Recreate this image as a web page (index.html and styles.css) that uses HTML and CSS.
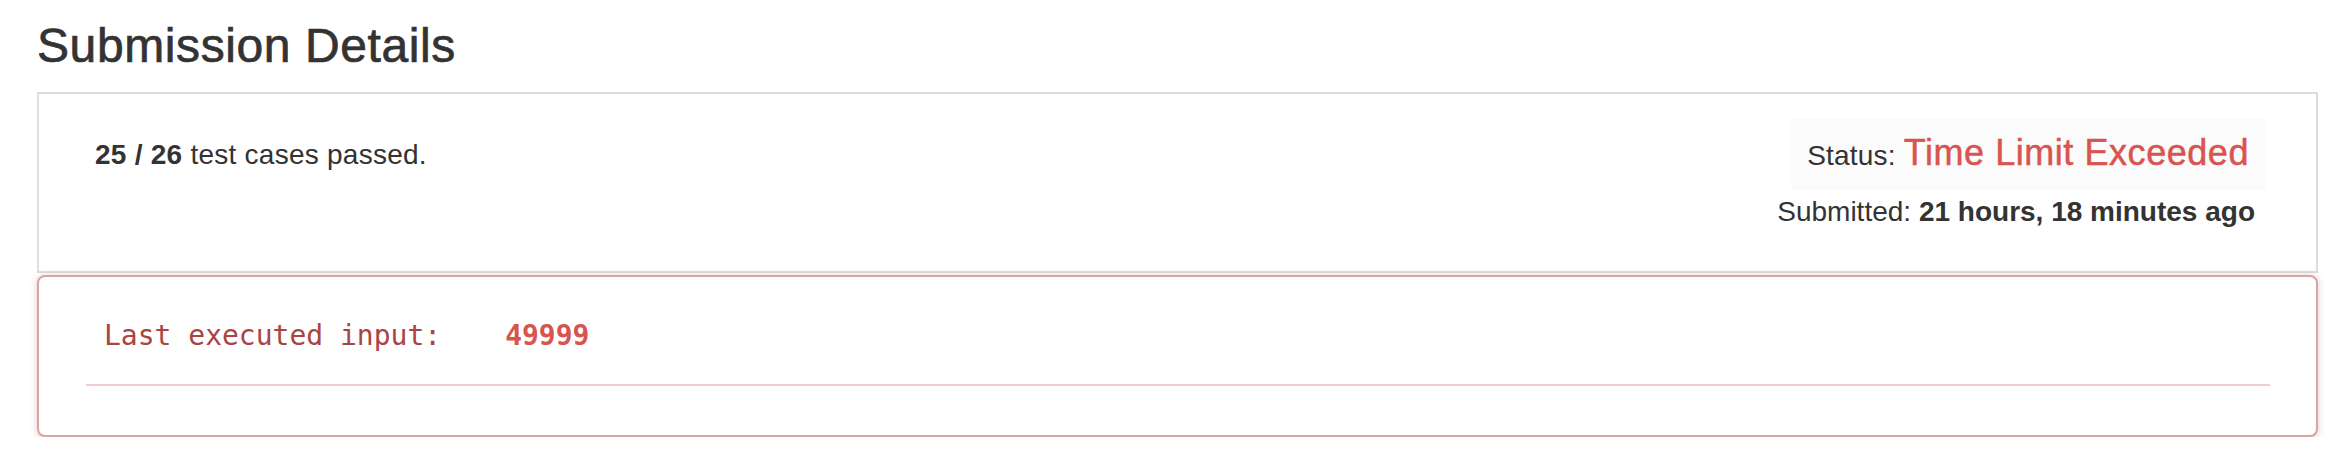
FILE: index.html
```html
<!DOCTYPE html>
<html lang="en">
<head>
<meta charset="utf-8">
<title>Submission Details</title>
<link rel="stylesheet" href="styles.css">
</head>
<body>
<div class="page">
  <h3 class="title">Submission Details</h3>
  <div class="panel">
    <div class="panel-body">
      <div class="passed"><b>25 / 26</b> test cases passed.</div>
      <div class="meta">
        <div class="status">Status: <span class="status-text">Time Limit Exceeded</span></div>
        <div class="submitted">Submitted: <b>21 hours, 18 minutes ago</b></div>
      </div>
    </div>
  </div>
  <div class="panel-error">
    <div class="error-row">
      <span class="error-label">Last executed input:</span>
      <span class="error-value">49999</span>
    </div>
    <div class="error-rule"></div>
  </div>
</div>
</body>
</html>
```

FILE: styles.css
```css
html, body {
  margin: 0;
  padding: 0;
  background: #ffffff;
}
body {
  font-family: "Liberation Sans", Arial, sans-serif;
  color: #333333;
  font-size: 28px;
  line-height: 40px;
}
.page {
  padding: 20px 0 0 37px;
  width: 2281px;
}
.title {
  margin: 0 0 19px 0;
  font-size: 48px;
  line-height: 1.1;
  font-weight: 500;
  letter-spacing: 0.6px;
  color: #333333;
  -webkit-text-stroke: 0.7px #333333;
}
.panel {
  border: 2px solid #dedede;
  background: #ffffff;
}
.panel-body {
  display: flex;
  justify-content: space-between;
  align-items: flex-start;
  padding: 24px 50px 39px 56px;
}
.passed {
  margin-top: 17px;
  letter-spacing: 0.25px;
}
.passed b {
  font-weight: 700;
}
.meta {
  display: flex;
  flex-direction: column;
  align-items: flex-end;
}
.status {
  background: #fbfbfb;
  padding: 15px 17px 14px 16px;
  line-height: 40px;
  letter-spacing: 0.2px;
}
.status-text {
  font-size: 36px;
  color: #d9534f;
  letter-spacing: 0.55px;
  -webkit-text-stroke: 0.5px #d9534f;
}
.submitted {
  margin-top: 2px;
  padding-right: 11px;
}
.submitted b {
  font-weight: 700;
}
.panel-error {
  margin-top: 2px;
  border: 2px solid #d6a6a6;
  border-radius: 8px;
  box-shadow: 0 1px 7px rgba(180, 90, 90, 0.35);
  padding: 39px 46px 49px 47px;
  background: #ffffff;
}
.error-row {
  display: flex;
  padding-left: 18px;
  font-family: "DejaVu Sans Mono", "Liberation Mono", monospace;
  font-size: 28px;
  line-height: 40px;
}
.error-label {
  color: #a94442;
}
.error-value {
  margin-left: 64px;
  font-weight: 700;
  color: #d9534f;
}
.error-rule {
  margin-top: 28px;
  height: 2px;
  background: #f2cdcd;
}
```
